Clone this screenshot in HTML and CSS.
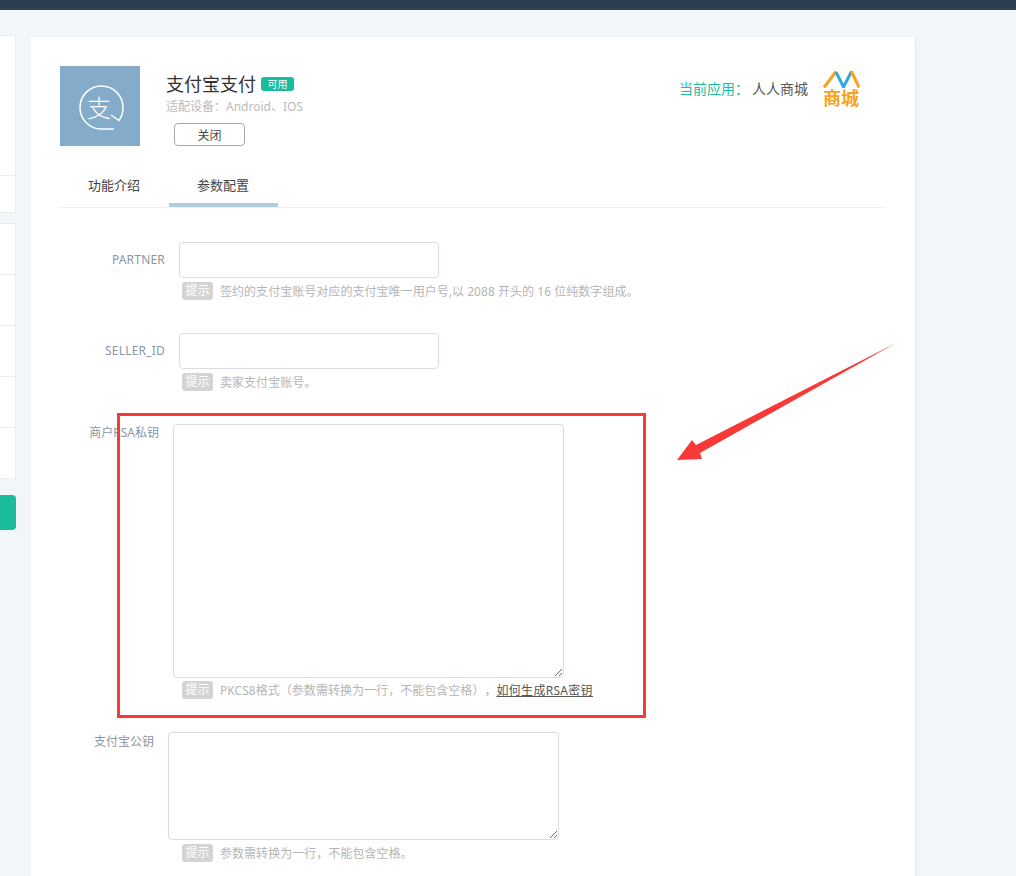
FILE: index.html
```html
<!DOCTYPE html>
<html lang="zh-CN">
<head>
    <meta charset="UTF-8">
    <title>支付宝支付</title>
    <link rel="stylesheet" href="styles.css">
</head>
<body>
    <div class="topbar"></div>
    <div class="layout">
        <aside class="sidebar">
            <div class="side-card">
                <div class="side-row side-row-big"></div>
                <div class="side-row side-row-small"></div>
            </div>
            <div class="side-card">
                <div class="side-row"></div>
                <div class="side-row"></div>
                <div class="side-row"></div>
                <div class="side-row"></div>
                <div class="side-row"></div>
            </div>
            <div class="side-btn"></div>
        </aside>
        <main class="card">
            <div class="head">
                <div class="plugin-logo">
                    <svg width="80" height="80" viewBox="0 0 80 80">
                        <path d="M54 63H41a21.5 21.5 0 1 1 22-21.5c0 5-1.500 9.500-4 13L51 49" fill="none" stroke="#fff" stroke-width="1.500"/>
                        <text class="logo-char" x="39" y="51">支</text>
                    </svg>
                </div>
                <div class="plugin-info">
                    <div class="plugin-title">支付宝支付<span class="tag">可用</span></div>
                    <div class="plugin-device">适配设备：Android、IOS</div>
                    <button class="btn-close">关闭</button>
                </div>
                <div class="current-app">
                    <span class="app-label">当前应用：</span>
                    <span class="app-name">人人商城</span>
                    <div class="app-logo">
                        <svg width="38" height="20" viewBox="0 0 38 20">
                            <path d="M2 19.500L14 3.500" fill="none" stroke="#f7a11d" stroke-width="3"/>
                            <path d="M14 4l7.500 15 8-15.500" fill="none" stroke="#2fa8e0" stroke-width="3"/>
                            <path d="M29.500 3.500L37 19.500" fill="none" stroke="#f7a11d" stroke-width="3"/>
                        </svg>
                        <span class="app-logo-text">商城</span>
                    </div>
                </div>
            </div>
            <div class="tabs">
                <div class="tab">功能介绍</div>
                <div class="tab active">参数配置</div>
            </div>
            <form class="form">
                <div class="group">
                    <div class="field">
                        <label class="label label-wide">PARTNER</label>
                        <input class="input" type="text">
                    </div>
                    <p class="hint"><span class="hint-tag">提示</span>签约的支付宝账号对应的支付宝唯一用户号,以 2088 开头的 16 位纯数字组成。</p>
                </div>
                <div class="group">
                    <div class="field">
                        <label class="label label-wide">SELLER_ID</label>
                        <input class="input" type="text">
                    </div>
                    <p class="hint"><span class="hint-tag">提示</span>卖家支付宝账号。</p>
                </div>
                <div class="group">
                    <div class="field">
                        <label class="label label-mid">商户RSA私钥</label>
                        <textarea class="textarea textarea-big"></textarea>
                    </div>
                    <p class="hint hint-tight"><span class="hint-tag">提示</span>PKCS8格式（参数需转换为一行，不能包含空格），<a class="hint-link" href="#">如何生成RSA密钥</a></p>
                </div>
                <div class="group">
                    <div class="field">
                        <label class="label label-narrow">支付宝公钥</label>
                        <textarea class="textarea textarea-small"></textarea>
                    </div>
                    <p class="hint"><span class="hint-tag">提示</span>参数需转换为一行，不能包含空格。</p>
                </div>
            </form>
        </main>
    </div>

    <!-- screenshot annotation -->
    <div class="mark-box"></div>
    <svg class="mark-arrow" width="1016" height="876" viewBox="0 0 1016 876">
        <polygon points="677,460 692,440 696,445 896,343 700,453 702,459" fill="#f93838"/>
    </svg>
</body>
</html>
```

FILE: styles.css
```css
html, body {
    height: 876px;
    overflow: hidden;
}
body {
    margin: 0;
    background: #f3f6f9;
    font-family: "Noto Sans", "Noto Sans CJK SC", sans-serif;
    font-size: 12px;
    color: #333;
    text-spacing-trim: space-all;
}
.topbar {
    height: 10px;
    background: #2d3e50;
}
.layout {
    display: flex;
    align-items: flex-start;
    gap: 14px;
    padding-top: 25px;
}
.sidebar {
    flex: none;
    width: 16px;
}
.side-card {
    background: #fff;
    border-right: 1px solid #eaeef2;
    border-bottom: 1px solid #eaeef2;
    border-top: 1px solid #eaeef2;
    margin-bottom: 10px;
}
.side-row {
    height: 50px;
    border-bottom: 1px solid #eaeef2;
}
.side-row:last-child {
    border-bottom: none;
}
.side-row-big {
    height: 139px;
}
.side-row-small {
    height: 36px;
}
.side-btn {
    height: 35px;
    margin-top: 16px;
    background: #1abc9c;
    border-radius: 0 4px 4px 0;
}
.card {
    flex: none;
    box-sizing: border-box;
    width: 886px;
    height: 840px;
    margin-top: 1px;
    padding: 29px 30px 0 29px;
    background: #fff;
    border: 1px solid #eef1f5;
    border-bottom: none;
    border-right-color: #e6eaef;
}
.head {
    display: flex;
    align-items: flex-start;
    height: 104px;
}
.plugin-logo {
    flex: none;
    width: 80px;
    height: 80px;
    background: #85abca;
}
.logo-char {
    font-family: "Noto Sans CJK SC", sans-serif;
    font-size: 24px;
    font-weight: 300;
    fill: #fff;
    text-anchor: middle;
}
.plugin-info {
    margin-left: 26px;
}
.plugin-title {
    height: 26px;
    margin-top: 5px;
    font-size: 18px;
    line-height: 26px;
    color: #333;
}
.tag {
    display: inline-block;
    width: 33px;
    height: 14px;
    margin-left: 5px;
    background: #1abc9c;
    border-radius: 3px;
    color: #fff;
    font-size: 10px;
    line-height: 14px;
    text-align: center;
    vertical-align: 3px;
}
.plugin-device {
    height: 18px;
    margin-top: 1px;
    line-height: 18px;
    color: #bbb;
}
.btn-close {
    display: block;
    width: 71px;
    height: 23px;
    margin: 7px 0 0 8px;
    padding: 0;
    background: #fff;
    border: 1px solid #aaa;
    border-radius: 4px;
    font-family: inherit;
    font-size: 12px;
    color: #444;
}
.current-app {
    display: flex;
    align-items: center;
    margin-left: auto;
    margin-top: 2px;
    padding-right: 25px;
    font-size: 14px;
}
.app-label {
    color: #1abc9c;
}
.app-name {
    margin-left: 3px;
    color: #555;
}
.app-logo {
    display: flex;
    flex-direction: column;
    align-items: center;
    width: 38px;
    margin-left: 14px;
}
.app-logo svg {
    display: block;
}
.app-logo-text {
    font-family: "Noto Sans CJK SC", sans-serif;
    font-size: 18px;
    font-weight: 700;
    line-height: 19px;
    color: #f7a11d;
}
.tabs {
    display: flex;
    height: 37px;
    border-bottom: 1px solid #eef1f5;
}
.tab {
    box-sizing: border-box;
    width: 109px;
    height: 37px;
    padding-left: 28px;
    font-size: 13px;
    line-height: 30px;
    color: #444;
}
.tab.active {
    border-bottom: 4px solid #b3cde0;
}
.form {
    margin-top: 34px;
}
.group {
    margin-bottom: 33px;
}
.group:last-child {
    margin-bottom: 0;
}
.field {
    display: flex;
    align-items: flex-start;
    gap: 14px;
}
.label {
    flex: none;
    padding-top: 9px;
    line-height: 18px;
    text-align: right;
    color: #8a96a3;
}
.label-wide {
    width: 105px;
    letter-spacing: 0.2px;
}
.label-mid {
    width: 99px;
    padding-top: 0;
}
.label-narrow {
    width: 94px;
    padding-top: 1px;
}
.input, .textarea {
    box-sizing: border-box;
    display: block;
    margin: 0;
    background: #fff;
    border: 1px solid #d9dce8;
    border-radius: 4px;
}
.input {
    width: 260px;
    height: 36px;
}
.textarea {
    width: 391px;
}
.textarea-big {
    height: 254px;
}
.textarea-small {
    height: 108px;
}
.hint {
    display: flex;
    align-items: center;
    height: 18px;
    margin: 4px 0 0 122px;
    color: #b5b5b5;
    letter-spacing: 0.04px;
    white-space: pre;
}
.hint-tight {
    margin-top: 3px;
}
.hint-tag {
    width: 31px;
    height: 18px;
    margin-right: 7px;
    background: #d4d4d4;
    border-radius: 3px;
    color: #fff;
    line-height: 18px;
    text-align: center;
}
.hint-link {
    color: #555;
    letter-spacing: 0.3px;
    text-decoration: underline;
}
.mark-box {
    position: absolute;
    box-sizing: border-box;
    left: 117px;
    top: 413px;
    width: 529px;
    height: 305px;
    border: 3px solid #f93838;
}
.mark-arrow {
    position: absolute;
    left: 0;
    top: 0;
}
```
